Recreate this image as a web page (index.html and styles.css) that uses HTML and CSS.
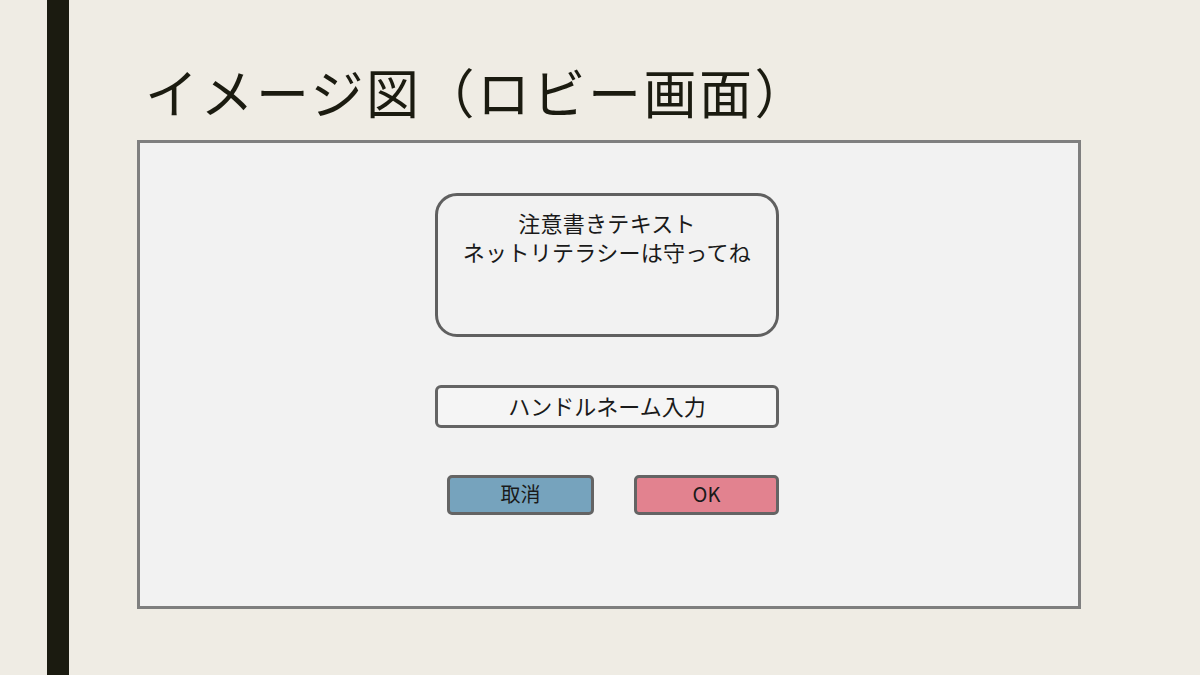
FILE: index.html
```html
<!DOCTYPE html>
<html lang="ja">
<head>
    <meta charset="UTF-8">
    <meta name="viewport" content="width=device-width, initial-scale=1.0">
    <title>イメージ図（ロビー画面）</title>
    <link rel="stylesheet" href="styles.css">
</head>
<body>
    <div class="slide">
        <div class="side_bar"></div>
        <div class="content">
            <h1 class="title">イメージ図（ロビー画面）</h1>
            <!-- ロビー画面のモック -->
            <div class="screen">
                <div class="dialog">
                    <div class="notice">
                        <p>注意書きテキスト<br>ネットリテラシーは守ってね</p>
                    </div>
                    <div class="name_input">ハンドルネーム入力</div>
                    <div class="buttons">
                        <div class="btn btn_cancel">取消</div>
                        <div class="btn btn_ok">OK</div>
                    </div>
                </div>
            </div>
        </div>
    </div>
</body>
</html>
```

FILE: styles.css
```css
body{margin:0; background:#efece4; color:#1b1b10;
    font-family:"Noto Sans CJK JP", "Noto Sans", sans-serif;}
.slide{display:flex; width:1200px; height:675px; overflow:hidden;}
.side_bar{width:22px; margin-left:47px; background:#1b1b10; flex-shrink:0;}
.content{padding-left:68px; flex:1;}

.title{font-size:53px; font-weight:400; line-height:1; margin:65px 0 0 8px; letter-spacing:2.5px;}

.screen{width:938px; height:463px; margin-top:22px; border:3px solid #7f7f7f; background:#f2f2f2;}
.dialog{width:344px; margin:50px 0 0 295px; color:#1a1a1a;}

.notice{height:138px; border:3px solid #606060; border-radius:22px; text-align:center;}
.notice p{margin:12px 0 0; font-size:22px; line-height:29px; letter-spacing:0.3px;}

.name_input{height:37px; margin-top:48px; border:3px solid #646464; border-radius:6px; background:#f5f5f5;
    text-align:center; font-size:22px; line-height:35px;}

.buttons{display:flex; justify-content:space-between; margin-top:47px; padding-left:12px;}
.btn{height:34px; border:3px solid #646464; border-radius:5px; text-align:center;
    font-size:20px; line-height:32px;}
.btn_cancel{width:141px; background:#76a3bd;}
.btn_ok{width:139px; background:#e2828f;}
```
